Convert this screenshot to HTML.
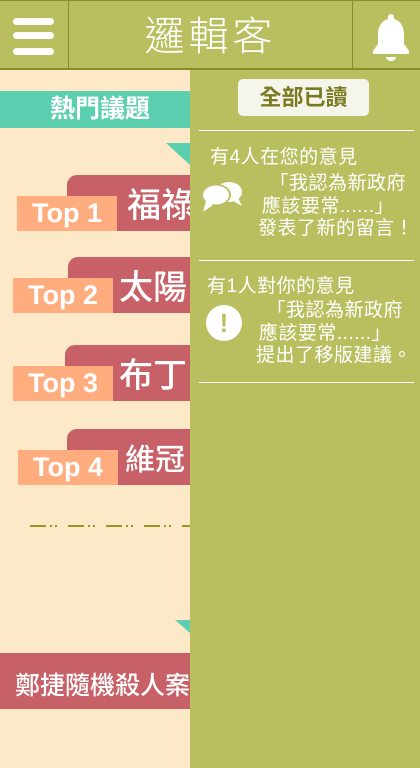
<!DOCTYPE html>
<html><head><meta charset="utf-8"><style>
*{margin:0;padding:0;box-sizing:border-box}
body{width:420px;height:768px;overflow:hidden;background:#fde8c8;position:relative;font-family:"Liberation Sans","Noto Sans CJK TC",sans-serif}
.a{position:absolute}
.hdr{left:0;top:0;width:420px;height:70px;background:#b9bf5f;border-top:1px solid #8a8c2a;border-bottom:2px solid #8a8c2a}
.red{background:#c86067;border-radius:10px 0 0 0;height:56px;color:#fff;font-size:34px;line-height:56px;font-family:"Noto Sans CJK TC",sans-serif;font-weight:500}
.lab{background:#ffad7f;color:#fff;font-size:27px;font-weight:bold;height:35px;line-height:35px;text-align:center;width:100px}
.p{color:#fff;font-size:19px;line-height:27px;letter-spacing:0.5px;white-space:nowrap}
</style></head><body>
<div class="a hdr"></div>
<div class="a" style="left:68px;top:0;width:1px;height:69px;background:#8a8c2a"></div>
<div class="a" style="left:352px;top:0;width:1px;height:69px;background:#8a8c2a"></div>
<div class="a" style="left:13px;top:18px;width:41px;height:7px;border-radius:4px;background:#fff"></div>
<div class="a" style="left:13px;top:32px;width:41px;height:7px;border-radius:4px;background:#fff"></div>
<div class="a" style="left:13px;top:48px;width:41px;height:7px;border-radius:4px;background:#fff"></div>
<div class="a" style="left:69px;top:8px;width:283px;text-align:center;color:#fff;font-size:40px;line-height:50px;letter-spacing:4px;font-family:'Noto Sans CJK TC',sans-serif;font-weight:300">邏輯客</div>
<svg class="a" style="left:370px;top:12px" width="42" height="50" viewBox="0 0 42 50"><path d="M21 2a3 3 0 0 1 3 3v2c7 2 10 8 10 16v9l5 7v3H3v-3l5-7v-9c0-8 3-14 10-16V5a3 3 0 0 1 3-3z" fill="#fff"/><path d="M16 45h10a5 4 0 0 1-10 0z" fill="#fff"/></svg>

<div class="a" style="left:0;top:91px;width:190px;height:37px;background:#5ccfb0;color:#fff;font-size:25px;font-weight:bold;line-height:37px;padding-left:50px">熱門議題</div>
<div class="a" style="left:166px;top:143px;width:0;height:0;border-top:22px solid #5ccfb0;border-left:24px solid transparent"></div>

<div class="a red" style="left:67px;top:175px;width:140px;padding-left:60px">福祿</div>
<div class="a lab" style="left:17px;top:196px">Top 1</div>
<div class="a red" style="left:68px;top:257px;width:140px;padding-left:51px">太陽</div>
<div class="a lab" style="left:13px;top:278px">Top 2</div>
<div class="a red" style="left:65px;top:345px;width:140px;padding-left:54px">布丁</div>
<div class="a lab" style="left:13px;top:366px">Top 3</div>
<div class="a red" style="left:67px;top:429px;width:140px;padding-left:58px;font-size:30px">維冠</div>
<div class="a lab" style="left:18px;top:450px">Top 4</div>
<div class="a" style="left:30px;top:525px;width:160px;height:2px;background:repeating-linear-gradient(90deg,#9a9428 0 16px,transparent 16px 20px,#9a9428 20px 22px,transparent 22px 25px,#9a9428 25px 27px,transparent 27px 38px)"></div>
<div class="a" style="left:175px;top:620px;width:0;height:0;border-top:13px solid #5ccfb0;border-left:15px solid transparent"></div>
<div class="a" style="left:0;top:653px;width:190px;height:56px;background:#c86067;color:#fff;font-size:25px;font-family:'Noto Sans CJK TC',sans-serif;font-weight:500;line-height:62px;padding-left:15px;white-space:nowrap;overflow:hidden">鄭捷隨機殺人案</div>

<div class="a" style="left:190px;top:70px;width:230px;height:698px;background:#b9bf5f"></div>
<div class="a" style="left:238px;top:79px;width:131px;height:37px;background:#f5f5ec;border-radius:5px;color:#7a7a20;font-size:22px;font-weight:bold;text-align:center;line-height:37px">全部已讀</div>
<div class="a" style="left:199px;top:130px;width:215px;height:1px;background:#fff"></div>
<div class="a p" style="left:210px;top:144px">有4人在您的意見</div>
<div class="a p" style="right:14px;top:170px">「我認為新政府</div>
<div class="a p" style="right:26px;top:193px">應該要常......」</div>
<div class="a p" style="right:6px;top:215px">發表了新的留言！</div>
<svg class="a" style="left:200px;top:180px" width="44" height="36" viewBox="0 0 44 36"><ellipse cx="29" cy="12" rx="13" ry="10" fill="#fff"/><path d="M38 18l4 8-9-5z" fill="#fff"/><ellipse cx="16" cy="15" rx="15" ry="11" fill="#b9bf5f"/><ellipse cx="16" cy="15" rx="13" ry="9.5" fill="#fff"/><path d="M6 21l-3 11 10-7z" fill="#fff"/></svg>
<div class="a" style="left:199px;top:260px;width:215px;height:1px;background:#fff"></div>
<div class="a p" style="left:207px;top:273px">有1人對你的意見</div>
<div class="a p" style="right:17px;top:297px">「我認為新政府</div>
<div class="a p" style="right:29px;top:320px">應該要常......」</div>
<div class="a p" style="right:8px;top:342px">提出了移版建議。</div>
<div class="a" style="left:206px;top:305px;width:36px;height:36px;border-radius:50%;background:#fff;color:#b9bf5f;font-size:26px;font-weight:bold;text-align:center;line-height:36px">!</div>
<div class="a" style="left:199px;top:382px;width:215px;height:1px;background:#fff"></div>
</body></html>
